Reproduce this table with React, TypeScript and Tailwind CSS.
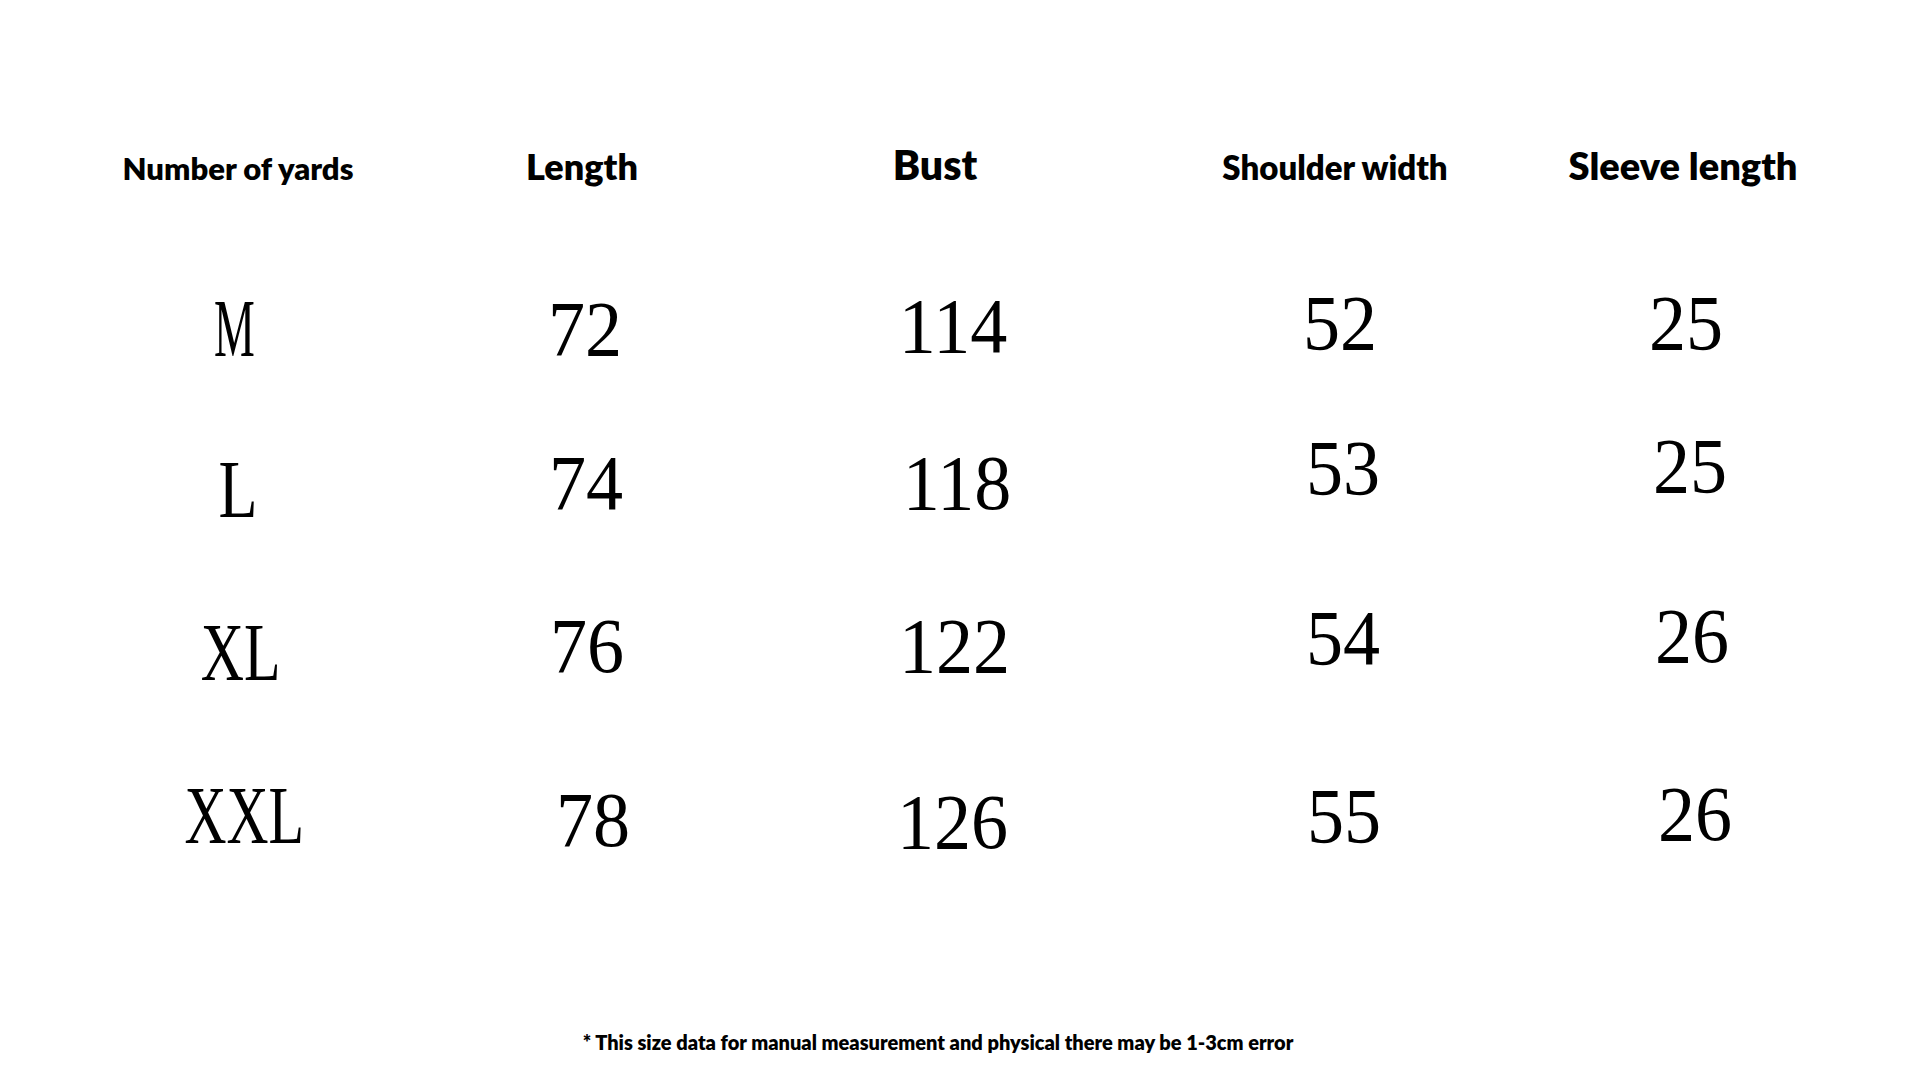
import React from "react";

type Cell = { v: string; cls: string };

const headers = [
  { label: "Number of yards", cls: "text-[31px]" },
  { label: "Length", cls: "text-[36px]" },
  { label: "Bust", cls: "text-[41px]" },
  { label: "Shoulder width", cls: "text-[33px]" },
  { label: "Sleeve length", cls: "text-[38px]" },
];

// each cell carries its own small nudge, the source image is hand-typed and uneven
const rows: { h: string; cells: Cell[] }[] = [
  {
    h: "h-[159px]",
    cells: [
      { v: "M", cls: "text-[82px] scale-x-[0.56] -translate-x-[5px] translate-y-[3px]" },
      { v: "72", cls: "text-[78px] scale-x-[0.95] -translate-x-[4px] translate-y-[2px]" },
      { v: "114", cls: "text-[78px] scale-x-[0.95] -translate-x-[4px] -translate-y-[1px]" },
      { v: "52", cls: "text-[78px] scale-x-[0.95] -translate-x-[2px] -translate-y-[4px]" },
      { v: "25", cls: "text-[78px] scale-x-[0.95] -translate-x-[5px] -translate-y-[4px]" },
    ],
  },
  {
    h: "h-[163px]",
    cells: [
      { v: "L", cls: "text-[82px] scale-x-[0.78] -translate-x-[1px] translate-y-[5px]" },
      { v: "74", cls: "text-[78px] scale-x-[0.95] -translate-x-[3px] -translate-y-[3px]" },
      { v: "118", cls: "text-[78px] scale-x-[0.95] -translate-y-[3px]" },
      { v: "53", cls: "text-[78px] scale-x-[0.95] translate-x-[1px] -translate-y-[18px]" },
      { v: "25", cls: "text-[78px] scale-x-[0.95] -translate-x-[1px] -translate-y-[20px]" },
    ],
  },
  {
    h: "h-[168px]",
    cells: [
      { v: "XL", cls: "text-[82px] scale-x-[0.73] translate-x-[2px] translate-y-[5px]" },
      { v: "76", cls: "text-[78px] scale-x-[0.95] -translate-x-[2px] -translate-y-[3px]" },
      { v: "122", cls: "text-[78px] scale-x-[0.95] -translate-x-[3px] -translate-y-[3px]" },
      { v: "54", cls: "text-[78px] scale-x-[0.95] translate-x-[1px] -translate-y-[11px]" },
      { v: "26", cls: "text-[78px] scale-x-[0.95] translate-x-[1px] -translate-y-[13px]" },
    ],
  },
  {
    h: "h-[100px]",
    cells: [
      { v: "XXL", cls: "text-[82px] scale-x-[0.71] translate-x-[5px]" },
      { v: "78", cls: "text-[78px] scale-x-[0.95] translate-x-[4px] translate-y-[3px]" },
      { v: "126", cls: "text-[78px] scale-x-[0.95] -translate-x-[5px] translate-y-[5px]" },
      { v: "55", cls: "text-[78px] scale-x-[0.95] translate-x-[2px] -translate-y-[1px]" },
      { v: "26", cls: "text-[78px] scale-x-[0.95] translate-x-[4px] -translate-y-[3px]" },
    ],
  },
];

export default function App() {
  return (
    <div className="w-[1920px] h-[1088px] bg-white text-black overflow-hidden flex flex-col">
      {/* Header */}
      <div className="pt-[144px] pl-[60px] grid grid-cols-[356px_332px_374px_426px_270px] items-baseline font-['Lato',sans-serif] font-extrabold leading-none">
        {headers.map((h) => (
          <div key={h.label} className={`text-center whitespace-nowrap ${h.cls}`}>
            {h.label}
          </div>
        ))}
      </div>

      {/* Size rows */}
      <div className="mt-[100px] pl-[60px] font-['Liberation_Serif',serif] leading-none">
        {rows.map((r, i) => (
          <div key={i} className={`grid grid-cols-[358px_342px_394px_376px_324px] items-baseline ${r.h}`}>
            {r.cells.map((c, j) => (
              <div key={j} className={`flex justify-center ${j === 4 ? "-ml-[3px]" : ""}`}>
                <span className={`inline-block ${c.cls}`}>{c.v}</span>
              </div>
            ))}
          </div>
        ))}
      </div>

      {/* Note */}
      <div className="mt-[157px] flex justify-center pr-[44px] font-['Lato',sans-serif] font-extrabold text-[20px] leading-none whitespace-nowrap">
        * This size data for manual measurement and physical there may be 1-3cm error
      </div>
    </div>
  );
}
